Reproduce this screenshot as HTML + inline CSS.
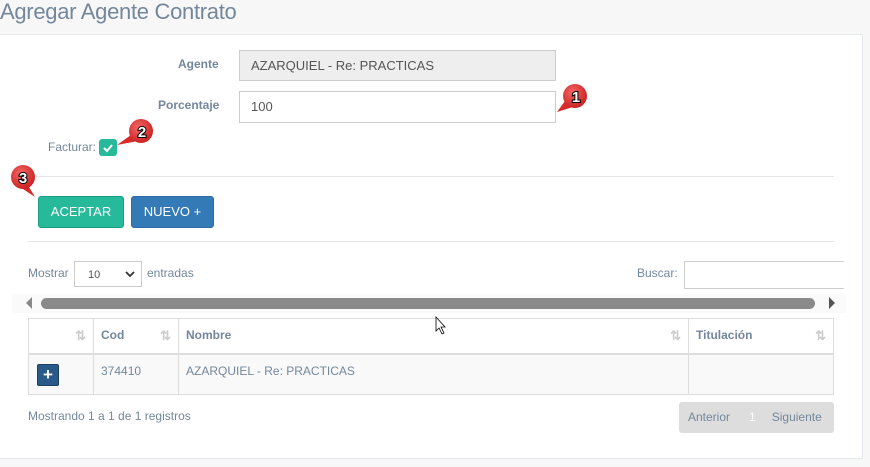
<!DOCTYPE html>
<html><head><meta charset="utf-8"><style>
body{margin:0;width:870px;height:467px;background:#f7f7f7;font-family:"Liberation Sans",Arial,sans-serif;position:relative;overflow:hidden;color:#73879c}
.abs{position:absolute}
h1{position:absolute;left:0;top:-1px;margin:0;font-weight:normal;font-size:22px;color:#73879c;letter-spacing:-0.3px}
.panel{position:absolute;left:0;top:34px;width:862px;height:423px;background:#fff;border-top:1px solid #e6e9ed;border-right:1px solid #e6e9ed;border-bottom:1px solid #e6e9ed}
.lbl{font-size:12px;font-weight:bold;color:#73879c}
.inp{position:absolute;border:1px solid #ccc;font-size:13px;color:#555;box-sizing:border-box;padding-left:11px}
.btn{position:absolute;color:#fff;font-size:13px;text-align:center;border-radius:3px;box-sizing:border-box}
.sm{font-size:12px;color:#73879c}
table{border-collapse:collapse;position:absolute;left:28px;top:318px;width:806px;font-size:12px;table-layout:fixed}
td,th{border:1px solid #ddd;text-align:left;padding:0 7px;color:#73879c}
th{height:34px;border-bottom:2px solid #ddd;font-weight:bold}
.sort{float:right;color:#ccc;font-weight:bold;font-size:13px}
</style></head><body>
<h1>Agregar Agente Contrato</h1>
<div class="panel"></div>
<div class="abs lbl" style="left:178px;top:57px">Agente</div>
<div class="inp" style="left:239px;top:50px;width:317px;height:31px;background:#eee;line-height:29px">AZARQUIEL - Re: PRACTICAS</div>
<div class="abs lbl" style="left:158px;top:98px">Porcentaje</div>
<div class="inp" style="left:239px;top:91px;width:317px;height:32px;background:#fff;line-height:30px">100</div>
<div class="abs sm" style="left:48px;top:140px">Facturar:</div>
<div class="abs" style="left:99px;top:139px;width:18px;height:17px;background:#26b99a;border-radius:3px"><svg width="18" height="17"><path d="M5 9l3 3 5-6" stroke="#fff" stroke-width="2" fill="none"/></svg></div>
<div class="abs" style="left:28px;top:176px;width:806px;border-top:1px solid #e5e5e5"></div>
<div class="btn" style="left:38px;top:196px;width:86px;height:32px;background:#26b99a;border:1px solid #169f85;line-height:30px">ACEPTAR</div>
<div class="btn" style="left:131px;top:196px;width:83px;height:32px;background:#337ab7;border:1px solid #2e6da4;line-height:30px">NUEVO +</div>
<div class="abs" style="left:28px;top:241px;width:806px;border-top:1px solid #e5e5e5"></div>
<div class="abs sm" style="left:28px;top:266px">Mostrar</div>
<div class="abs" style="left:74px;top:261px;width:68px;height:26px;border:1px solid #ccc;box-sizing:border-box;font-size:11px;color:#555;padding:7px 0 0 13px">10<svg style="position:absolute;right:6px;top:9px" width="10" height="7"><path d="M1 1l4 4 4-4" stroke="#333" stroke-width="1.8" fill="none"/></svg></div>
<div class="abs sm" style="left:147px;top:266px">entradas</div>
<div class="abs sm" style="left:637px;top:266px">Buscar:</div>
<div class="abs" style="left:684px;top:261px;width:160px;height:28px;border:1px solid #ccc;box-sizing:border-box;border-right:none"></div>
<div class="abs" style="left:12px;top:294px;width:834px;height:19px;background:#fafafa"></div>
<div class="abs" style="left:26px;top:297px;width:0;height:0;border-top:6px solid transparent;border-bottom:6px solid transparent;border-right:6px solid #888"></div>
<div class="abs" style="left:829px;top:297px;width:0;height:0;border-top:6px solid transparent;border-bottom:6px solid transparent;border-left:6px solid #555"></div>
<div class="abs" style="left:41px;top:298px;width:774px;height:11px;background:#8a8a8a;border-radius:6px"></div>
<table>
<colgroup><col style="width:65px"><col style="width:85px"><col style="width:510px"><col></colgroup>
<tr><th><span class="sort">&#8645;</span></th><th>Cod<span class="sort">&#8645;</span></th><th>Nombre<span class="sort">&#8645;</span></th><th>Titulación<span class="sort">&#8645;</span></th></tr>
<tr style="background:#f9f9f9;height:40px"><td style="vertical-align:top;padding-top:9px"><div style="width:20px;height:20px;background:#2a5a8a;border:1px solid #1d3f62;border-radius:2px;color:#fff;text-align:center;font-weight:bold;font-size:17px;line-height:19px;margin-left:1px">+</div></td><td style="vertical-align:top;padding-top:9px">374410</td><td style="vertical-align:top;padding-top:9px">AZARQUIEL - Re: PRACTICAS</td><td></td></tr>
</table>
<div class="abs sm" style="left:28px;top:409px">Mostrando 1 a 1 de 1 registros</div>
<div class="abs" style="left:679px;top:402px;width:155px;height:31px;background:#ddd;border-radius:3px;font-size:12px;color:#73879c;line-height:31px"><span style="margin-left:9px">Anterior</span><span style="margin-left:19px;color:#fff">1</span><span style="margin-left:16px">Siguiente</span></div>
<svg class="abs" style="left:0;top:0" width="870" height="467">
<defs><radialGradient id="g" cx="40%" cy="35%" r="70%"><stop offset="0" stop-color="#f56565"/><stop offset="1" stop-color="#c81e1e"/></radialGradient></defs>
<g fill="#d52b2b">
<polygon points="565,101 573,107 557,112"/><circle cx="575" cy="96" r="12" fill="url(#g)"/>
<polygon points="131,135 138,141 117,145"/><circle cx="141" cy="131" r="12" fill="url(#g)"/>
<polygon points="20,187 29,187 35,197"/><circle cx="23" cy="177" r="12" fill="url(#g)"/>
</g>
<g font-family="Liberation Sans,Arial" font-weight="bold" font-size="15" fill="#fff" stroke="#000" stroke-width="2" paint-order="stroke" text-anchor="middle">
<text x="576" y="102">1</text><text x="142" y="137">2</text><text x="23" y="183">3</text>
</g>
<path d="M436 317 v14 l3-3 3 6 2-1-3-6 4 0z" fill="#fff" stroke="#000" stroke-width="0.8"/>
</svg>
</body></html>
